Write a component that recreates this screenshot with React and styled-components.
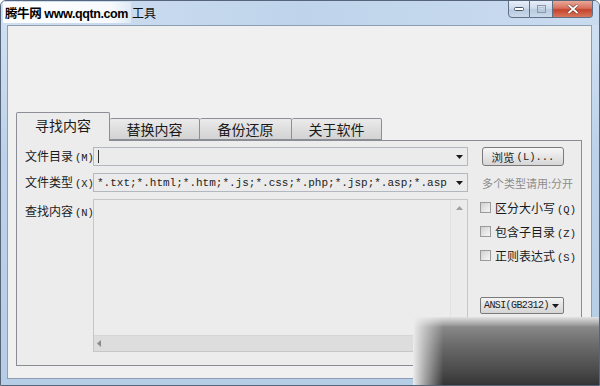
import styled, { createGlobalStyle } from 'styled-components';

const GlobalStyle = createGlobalStyle`
	* { box-sizing: border-box; }
	body {
		margin: 0;
		background: #ffffff;
		font-family: "Noto Sans CJK SC", "Liberation Sans", sans-serif;
	}
`;

const Window = styled.div`
	position: relative;
	width: 600px;
	height: 386px;
	display: flex;
	flex-direction: column;
	border: 1px solid #56657a;
	border-radius: 6px 6px 0 0;
	background: linear-gradient(180deg, #d3e2f3 0%, #bcd2ea 40%, #b6cde6 100%);
	overflow: hidden;
`;

const TitleBar = styled.div`
	height: 24px;
	display: flex;
	align-items: flex-start;
	padding-left: 2px;
	background: linear-gradient(90deg, #cfdff1 0%, #bfd4eb 50%, #c9dbef 100%);
`;

const Title = styled.div`
	display: flex;
	align-items: center;
	height: 21px;
	margin-top: 1px;
	color: #000;
`;

const Watermark = styled.span`
	display: flex;
	align-items: center;
	height: 100%;
	padding: 0 3px 0 2px;
	background: linear-gradient(90deg, #ffffff 0%, #f7f9fc 85%, rgba(255, 255, 255, 0.4) 100%);
	font-family: "Liberation Sans", "Noto Sans CJK SC", sans-serif;
	font-weight: bold;
	font-size: 12.5px;
	letter-spacing: -0.4px;
`;

const TitleRest = styled.span`
	padding-left: 1px;
	font-size: 12px;
	color: #111;
`;

const Controls = styled.div`
	margin-left: auto;
	margin-right: 6px;
	margin-top: -1px;
	display: flex;
	height: 18px;
`;

const CtrlButton = styled.div`
	display: flex;
	align-items: center;
	justify-content: center;
	width: ${(p) => p.$w}px;
	height: 18px;
	border: 1px solid #5f6f85;
	border-left: ${(p) => (p.$first ? '1px solid #5f6f85' : 'none')};
	border-radius: ${(p) => p.$radius || '0'};
	background: ${(p) =>
		p.$close
			? 'linear-gradient(180deg, #e9a898 0%, #d7705c 45%, #c4432c 55%, #d9775c 100%)'
			: 'linear-gradient(180deg, #e6eef8 0%, #cfdcec 45%, #b9cbe0 55%, #cbd9ea 100%)'};
`;

const Client = styled.div`
	flex: 1;
	margin: 0 7px 6px 6px;
	display: flex;
	flex-direction: column;
	border: 1px solid #8e9fb3;
	background: #f0f0f0;
`;

const TopArea = styled.div`
	height: 86px;
`;

const TabStrip = styled.div`
	height: 28px;
	margin-left: 8px;
	display: flex;
	align-items: flex-end;
	position: relative;
	z-index: 1;
`;

const Tab = styled.div`
	width: ${(p) => p.$w}px;
	height: ${(p) => (p.$active ? 29 : 22)}px;
	margin-bottom: ${(p) => (p.$active ? -1 : 0)}px;
	display: flex;
	align-items: center;
	justify-content: center;
	padding-bottom: ${(p) => (p.$active ? 4 : 0)}px;
	border: 1px solid #8c8f96;
	border-bottom: ${(p) => (p.$active ? 'none' : '1px solid #8c8f96')};
	border-left: ${(p) => (p.$after ? 'none' : '1px solid #8c8f96')};
	border-radius: 2px 2px 0 0;
	background: ${(p) =>
		p.$active ? '#ececec' : 'linear-gradient(180deg, #ebebeb 0%, #dedede 50%, #d3d3d3 100%)'};
	font-size: 14px;
	color: #1a1a1a;
	line-height: 1;
`;

const Panel = styled.div`
	height: 226px;
	margin: 0 9px 0 8px;
	padding: 6px 0 0 8px;
	border: 1px solid #898c95;
	background: #ececec;
	display: grid;
	grid-template-columns: 68px 375px 96px;
	grid-template-rows: 19px 19px 153px;
	row-gap: 7px;
`;

const Label = styled.div`
	align-self: ${(p) => (p.$top ? 'start' : 'center')};
	padding-top: ${(p) => (p.$top ? 4 : 0)}px;
	font-size: 12px;
	color: #1a1a1a;
	white-space: nowrap;
	line-height: 16px;
`;

const Combo = styled.div`
	display: flex;
	align-items: center;
	height: 19px;
	padding: 0 4px 0 3px;
	border: 1px solid #b3b8c0;
	background: #ebebeb;
	font-family: "Liberation Mono", monospace;
	font-size: 11px;
	color: #222;
	overflow: hidden;
	white-space: nowrap;
`;

const ComboText = styled.span`
	flex: 1;
	overflow: hidden;
`;

const Caret = styled.span`
	width: 1px;
	height: 13px;
	background: #333;
	margin-left: 1px;
`;

const Arrow = styled.svg`
	flex: none;
	margin-left: auto;
`;

const Side = styled.div`
	padding-left: ${(p) => p.$pad ?? 14}px;
	display: flex;
	flex-direction: column;
	justify-content: ${(p) => (p.$center ? 'center' : 'flex-start')};
`;

const Button = styled.div`
	width: 82px;
	height: 19px;
	display: flex;
	align-items: center;
	justify-content: center;
	border: 1px solid #7a7a7a;
	border-radius: 3px;
	background: linear-gradient(180deg, #f6f6f6 0%, #e6e6e6 50%, #d6d6d6 100%);
	font-size: 11.5px;
	color: #222;
`;

const Hint = styled.div`
	font-size: 11px;
	color: #8d8d8d;
	white-space: nowrap;
`;

const TextBox = styled.div`
	display: grid;
	grid-template-columns: 1fr 17px;
	grid-template-rows: 1fr 16px;
	border: 1px solid #c6c6c6;
	background: #ececec;
`;

const VScroll = styled.div`
	border-left: 1px solid #e2e2e2;
	background: #ebebeb;
	display: flex;
	justify-content: center;
	padding-top: 6px;
`;

const HScroll = styled.div`
	background: #dddddd;
	border-top: 1px solid #d5d5d5;
	display: flex;
	align-items: center;
	padding-left: 3px;
`;

const Corner = styled.div`
	background: #e4e4e4;
`;

const CheckRow = styled.div`
	display: flex;
	align-items: center;
	gap: 4px;
	height: 14px;
	margin-top: ${(p) => p.$mt || 0}px;
	font-size: 12px;
	color: #1a1a1a;
	white-space: nowrap;
`;

const Box = styled.span`
	display: block;
	flex: none;
	width: 11px;
	height: 11px;
	border: 1px solid #9a9a9a;
	background: linear-gradient(135deg, #cfcfcf 0%, #e4e4e4 50%, #f6f6f6 100%);
`;

const Hot = styled.span`
	font-family: "Liberation Mono", monospace;
	font-size: 10.5px;
	margin-left: 2px;
`;

const EncodingSelect = styled.div`
	margin-top: 35px;
	width: 84px;
	height: 17px;
	display: flex;
	align-items: center;
	padding: 0 4px 0 3px;
	border: 1px solid #7a7a7a;
	border-radius: 2px;
	background: linear-gradient(180deg, #f4f4f4 0%, #e3e3e3 50%, #d5d5d5 100%);
	font-family: "Liberation Mono", monospace;
	font-size: 10px;
	color: #222;
	letter-spacing: -0.6px;
	white-space: nowrap;
`;

/* blurred dark watermark over the lower right corner of the photo */
const Smudge = styled.div`
	position: absolute;
	left: 412px;
	top: 316px;
	width: 190px;
	height: 72px;
	background:
		linear-gradient(90deg, #ececec 0%, rgba(236, 236, 236, 0.6) 6%, rgba(236, 236, 236, 0) 16%),
		linear-gradient(180deg, rgba(236, 236, 236, 0.9) 0%, rgba(236, 236, 236, 0) 14%),
		linear-gradient(180deg, #8c8c8c 10%, #6a6a6a 40%, #4a4a4a 75%, #2e2e2e 100%);
	pointer-events: none;
`;

const DownArrow = () => (
	<Arrow width="7" height="4" viewBox="0 0 7 4">
		<path d="M0 0h7L3.5 4z" fill="#1a1a1a" />
	</Arrow>
);

const checks = [
	{ text: '区分大小写', key: 'Q' },
	{ text: '包含子目录', key: 'Z' },
	{ text: '正则表达式', key: 'S' },
];

const tabs = [
	{ label: '寻找内容', w: 94, active: true },
	{ label: '替换内容', w: 90 },
	{ label: '备份还原', w: 92 },
	{ label: '关于软件', w: 90 },
];

export default function App() {
	return (
		<>
			<GlobalStyle />
			<Window>
				<TitleBar>
					<Title>
						<Watermark>腾牛网 www.qqtn.com</Watermark>
						<TitleRest>工具</TitleRest>
					</Title>
					<Controls>
						<CtrlButton $w={22} $first $radius="0 0 0 4px">
							<svg width="10" height="4" viewBox="0 0 10 4">
								<rect x="0.5" y="0.5" width="9" height="3" rx="1" fill="#fff" stroke="#4a5566" />
							</svg>
						</CtrlButton>
						<CtrlButton $w={23}>
							<svg width="9" height="8" viewBox="0 0 9 8">
								<rect x="0.5" y="0.5" width="8" height="7" fill="none" stroke="#8a98aa" />
								<rect x="2" y="2.5" width="5" height="3.5" fill="none" stroke="#b8c4d2" />
							</svg>
						</CtrlButton>
						<CtrlButton $w={40} $close $radius="0 0 4px 0">
							<svg width="12" height="10" viewBox="0 0 12 10">
								<path d="M1.5 1l9 8M10.5 1l-9 8" stroke="#5a2a20" strokeWidth="3" />
								<path d="M1.5 1l9 8M10.5 1l-9 8" stroke="#fff" strokeWidth="1.8" />
							</svg>
						</CtrlButton>
					</Controls>
				</TitleBar>
				<Client>
					<TopArea />
					<TabStrip>
						{tabs.map((t, i) => (
							<Tab key={t.label} $w={t.w} $active={t.active} $after={i > 0}>
								{t.label}
							</Tab>
						))}
					</TabStrip>
					<Panel>
						<Label>
							文件目录<Hot>(M)</Hot>
						</Label>
						<Combo>
							<Caret />
							<DownArrow />
						</Combo>
						<Side>
							<Button>
								浏览<Hot>(L)...</Hot>
							</Button>
						</Side>

						<Label>
							文件类型<Hot>(X)</Hot>
						</Label>
						<Combo>
							<ComboText>*.txt;*.html;*.htm;*.js;*.css;*.php;*.jsp;*.asp;*.asp</ComboText>
							<DownArrow />
						</Combo>
						<Side $center>
							<Hint>多个类型请用:分开</Hint>
						</Side>

						<Label $top>
							查找内容<Hot>(N)</Hot>
						</Label>
						<TextBox>
							<div />
							<VScroll>
								<svg width="7" height="4" viewBox="0 0 7 4">
									<path d="M0 4h7L3.5 0z" fill="#a0a0a0" />
								</svg>
							</VScroll>
							<HScroll>
								<svg width="4" height="7" viewBox="0 0 4 7">
									<path d="M4 0v7L0 3.5z" fill="#8a8a8a" />
								</svg>
							</HScroll>
							<Corner />
						</TextBox>
						<Side $pad={12}>
							{checks.map((c, i) => (
								<CheckRow key={c.key} $mt={i ? 10 : 1}>
									<Box />
									<span>
										{c.text}
										<Hot>({c.key})</Hot>
									</span>
								</CheckRow>
							))}
							<EncodingSelect>
								ANSI(GB2312)
								<DownArrow />
							</EncodingSelect>
						</Side>
					</Panel>
				</Client>
				<Smudge />
			</Window>
		</>
	);
}
